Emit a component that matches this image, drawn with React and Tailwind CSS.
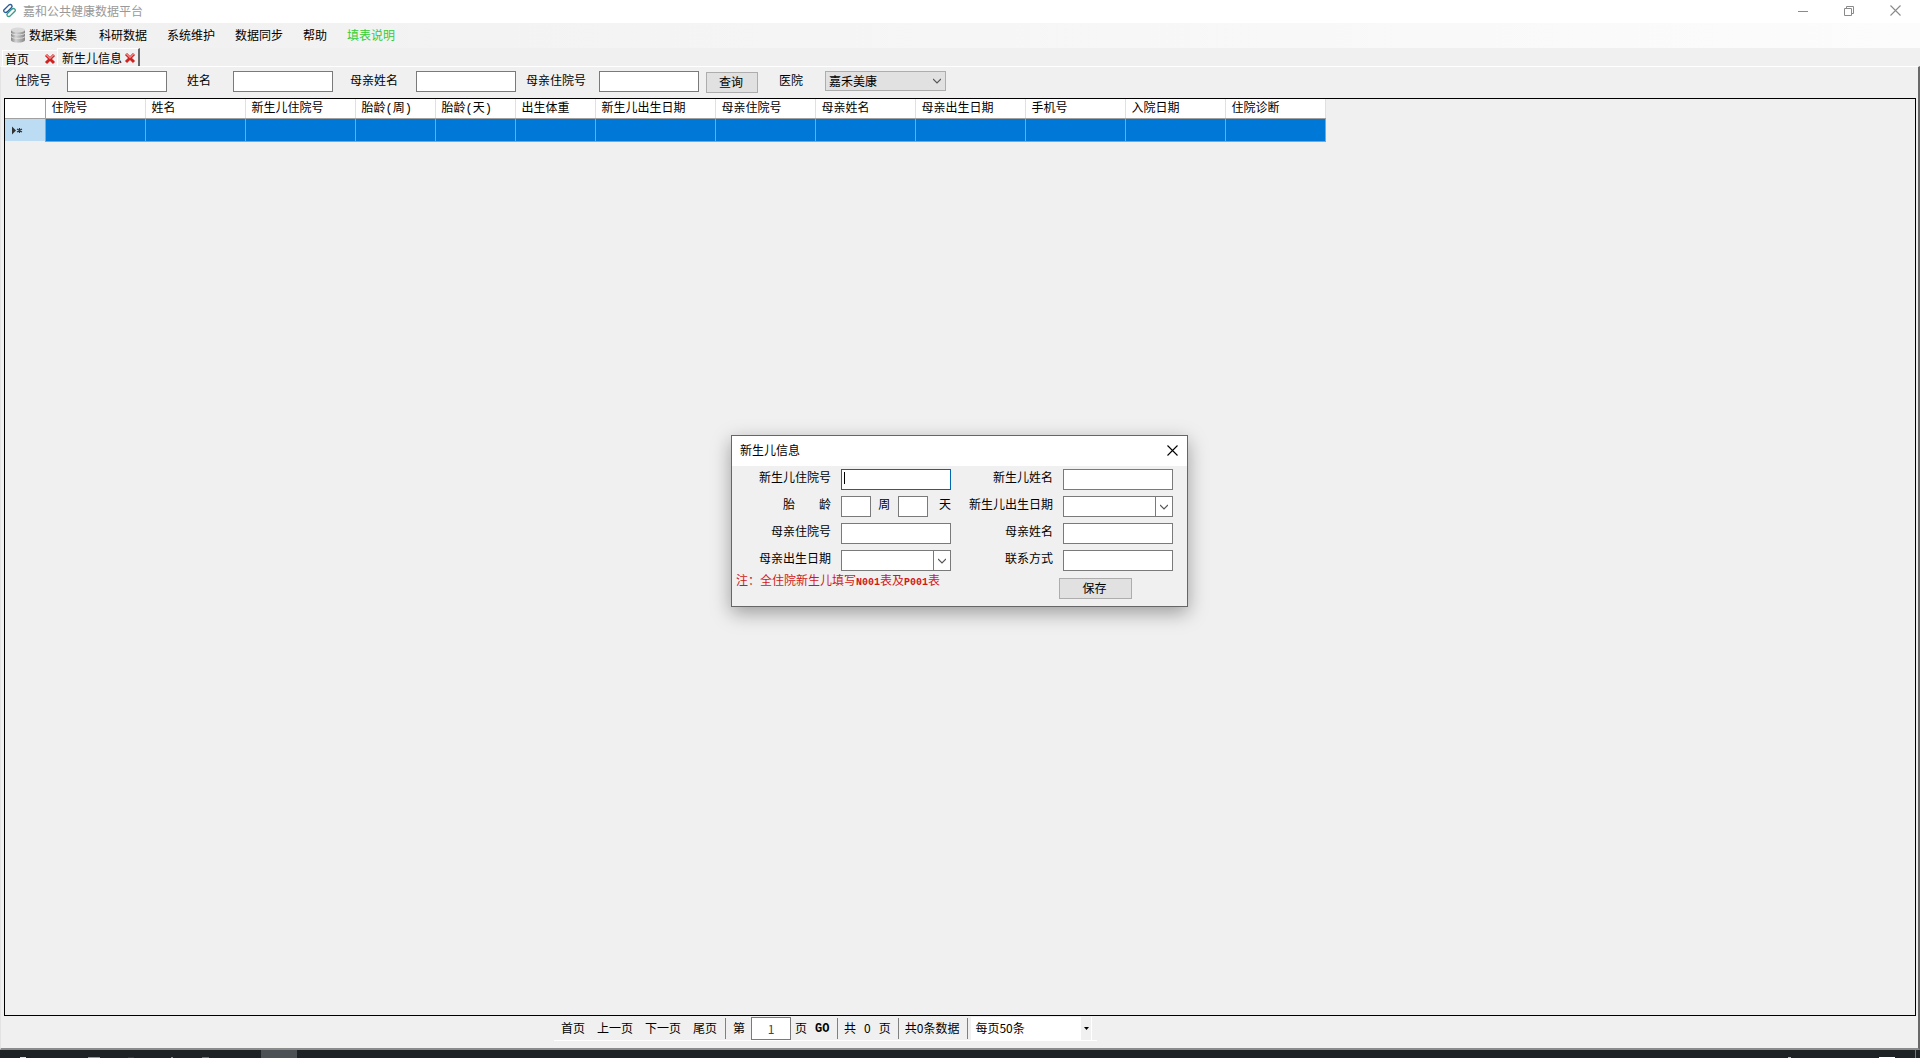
import React, { useState } from 'react';

const MENUS = ['科研数据', '系统维护', '数据同步', '帮助'];

const COLUMNS = [
  { label: '住院号', width: 'w-[100px]' },
  { label: '姓名', width: 'w-[100px]' },
  { label: '新生儿住院号', width: 'w-[110px]' },
  { label: '胎龄(周)', width: 'w-[80px]' },
  { label: '胎龄(天)', width: 'w-[80px]' },
  { label: '出生体重', width: 'w-[80px]' },
  { label: '新生儿出生日期', width: 'w-[120px]' },
  { label: '母亲住院号', width: 'w-[100px]' },
  { label: '母亲姓名', width: 'w-[100px]' },
  { label: '母亲出生日期', width: 'w-[110px]' },
  { label: '手机号', width: 'w-[100px]' },
  { label: '入院日期', width: 'w-[100px]' },
  { label: '住院诊断', width: 'w-[100px]' },
];

const FILTERS = [
  { id: 'f-no', label: '住院号', size: 'w-[52px]' },
  { id: 'f-name', label: '姓名', size: 'ml-5 w-[46px]' },
  { id: 'f-mother', label: '母亲姓名', size: 'ml-[17px] w-[66px]' },
  { id: 'f-mother-no', label: '母亲住院号', size: 'ml-[10px] w-[73px]' },
];

function Logo() {
  return (
    <svg className="h-[15px] w-[15px]" viewBox="0 0 16 16" fill="none" strokeWidth="1.5" strokeLinejoin="round">
      <path d="M2 7.500 7.500 2Q9 1 10.300 2.200 11.400 3.600 10 5L5.500 9.500Q4 10.800 2.500 9.600 1.200 8.500 2 7.500Z" stroke="#2a5c98" />
      <path d="M14 8.500 8.500 14Q7 15 5.700 13.800 4.600 12.400 6 11L10.500 6.500Q12 5.200 13.500 6.400 14.800 7.500 14 8.500Z" stroke="#3a9a8c" />
    </svg>
  );
}

function DatabaseIcon() {
  return (
    <svg className="h-4 w-4" viewBox="0 0 16 16">
      <defs>
        <linearGradient id="db" x1="0" x2="1">
          <stop offset="0" stopColor="#858585" />
          <stop offset="0.35" stopColor="#d4d4d4" />
          <stop offset="1" stopColor="#858585" />
        </linearGradient>
      </defs>
      <path d="M1 3v10c0 3.500 14 3.500 14 0V3z" fill="url(#db)" />
      <ellipse cx="8" cy="3" rx="7" ry="2.500" fill="#d9d9d9" />
      <path d="M1 6c1 2.500 13 2.500 14 0M1 9.500c1 2.500 13 2.500 14 0" fill="none" stroke="#e8e8e8" strokeWidth="0.800" />
    </svg>
  );
}

function RedCross() {
  return (
    <svg className="h-3 w-3" viewBox="0 0 12 12" fill="none">
      <path d="M2 2 10 10M10 2 2 10" stroke="#cf2323" strokeWidth="3" />
      <path d="M2 1.500 6 5.500 10 1.500" stroke="#ee8f8c" strokeWidth="1.200" />
    </svg>
  );
}

function Chevron() {
  return (
    <svg className="h-2 w-2" viewBox="0 0 8 8" fill="none" stroke="#555" strokeWidth="1.200">
      <path d="M0 2 4 6 8 2" />
    </svg>
  );
}

function CloseMark() {
  return (
    <svg className="h-[11px] w-[11px]" viewBox="0 0 11 11" fill="none" stroke="currentColor" strokeWidth="1.100">
      <path d="M.5.5l10 10M10.500.500l-10 10" />
    </svg>
  );
}

function TitleBar() {
  return (
    <header className="flex h-[23px] items-center bg-white pr-[2px] pb-[2px] pl-[2px] text-[#999]">
      <Logo />
      <h1 className="ml-[6px] flex-1">嘉和公共健康数据平台</h1>
      <div className="flex h-full text-[#8a8a8a]">
        <button aria-label="最小化" className="flex w-[46px] items-center justify-center">
          <svg className="h-[10px] w-[10px]" viewBox="0 0 10 10"><path d="M0 5.500h10" stroke="currentColor" /></svg>
        </button>
        <button aria-label="还原" className="flex w-[46px] items-center justify-center">
          <svg className="h-[10px] w-[10px]" viewBox="0 0 10 10" fill="none" stroke="currentColor">
            <path d="M.5 2.500h7v7h-7zM2.500 2.500v-2h7v7h-2" />
          </svg>
        </button>
        <button aria-label="关闭" className="flex w-[46px] items-center justify-center"><CloseMark /></button>
      </div>
    </header>
  );
}

function MenuBar() {
  return (
    <nav className="flex h-[25px] items-center bg-linear-to-r from-[#f0f0f0] to-[#fcfcfc] pb-[2px] pl-[10px]">
      <button className="flex items-center gap-[3px]"><DatabaseIcon />数据采集</button>
      <div className="ml-[22px] flex gap-5">
        {MENUS.map((m) => <button key={m}>{m}</button>)}
        <button className="text-[#32cd32]">填表说明</button>
      </div>
    </nav>
  );
}

function Tabs() {
  return (
    <div className="flex h-[18px] items-end pl-[2px]">
      <div className="flex h-[16px] w-[55px] items-center justify-between border-t border-l border-white pr-px pl-[2px]">
        <button>首页</button>
        <button aria-label="关闭 首页"><RedCross /></button>
      </div>
      <div className="flex h-[18px] w-[83px] items-center justify-between border-t border-r-2 border-l border-t-white border-r-[#696969] border-l-white pr-[2px] pl-1">
        <button>新生儿信息</button>
        <button aria-label="关闭 新生儿信息"><RedCross /></button>
      </div>
    </div>
  );
}

function FilterBar() {
  return (
    <form className="flex h-[31px] items-start pt-1 pl-[11px] leading-[18px]" onSubmit={(e) => e.preventDefault()}>
      {FILTERS.map((f) => (
        <React.Fragment key={f.id}>
          <label htmlFor={f.id} className={f.size}>{f.label}</label>
          <input id={f.id} className="h-[21px] w-[100px] border border-[#7a7a7a] bg-white px-1 outline-none" />
        </React.Fragment>
      ))}
      <button className="mt-px ml-[7px] h-[21px] w-[52px] border border-[#adadad] bg-[#e1e1e1] pr-[2px] pb-[2px]">查询</button>
      <label htmlFor="hospital" className="ml-[21px] w-[46px]">医院</label>
      <div className="relative">
        <select id="hospital" className="h-[20px] w-[121px] appearance-none border border-[#adadad] bg-[#e1e1e1] px-[3px]">
          <option>嘉禾美康</option>
        </select>
        <span className="pointer-events-none absolute top-[6px] right-[5px]"><Chevron /></span>
      </div>
    </form>
  );
}

function PatientGrid() {
  return (
    <main className="flex-1 overflow-auto border border-black">
      <table className="table-fixed border-collapse">
        <thead>
          <tr className="h-[19px] bg-white">
            <th className="w-[40px] border-r border-b border-[#a0a0a0]"></th>
            {COLUMNS.map((c) => (
              <th key={c.label} className={`${c.width} border-r border-b border-r-[#e0e0e0] border-b-[#a0a0a0] pt-[3px] pl-[6px] text-left font-['Liberation_Mono','Noto_Sans_CJK_SC',monospace] leading-[15px] font-normal whitespace-nowrap`}>
                {c.label}
              </th>
            ))}
          </tr>
        </thead>
        <tbody>
          <tr className="h-[23px] bg-[#0078d7]">
            <th className="border-r border-[#a0a0a0] bg-[#bcdcf4] pt-[2px] pl-[5px]">
              <svg className="h-[9px] w-[14px]" viewBox="0 0 14 9">
                <path d="M2 .5v8l4-4z" fill="#333" />
                <path d="M9.500 2v5M7 3l5 3M12 3 7 6" stroke="#333" strokeWidth="1.200" />
              </svg>
            </th>
            {COLUMNS.map((c) => <td key={c.label} className="border-r border-b border-[#84a4bf]"></td>)}
          </tr>
        </tbody>
      </table>
    </main>
  );
}

function Separator() {
  return <span className="h-[21px] w-px bg-[#808080]" />;
}

function Pager() {
  return (
    <footer className="flex h-[32px] items-start pl-[550px]">
      <div className="flex h-[25px] items-center border-b border-white pr-[5px] pl-[7px]">
        <div className="flex gap-3 pr-2">
          <button>首页</button>
          <button>上一页</button>
          <button>下一页</button>
          <button>尾页</button>
        </div>
        <Separator />
        <label htmlFor="page" className="pr-[6px] pl-[7px]">第</label>
        <input id="page" defaultValue="1" className="h-[23px] w-[40px] border border-[#7a7a7a] bg-white text-center text-[#444] outline-none" />
        <span className="ml-1 w-5">页</span>
        <button className="w-[22px] pt-px text-left font-['Liberation_Mono',monospace] text-[12px] font-bold">GO</button>
        <Separator />
        <span className="flex gap-2 pr-[7px] pl-[6px]">
          <span>共</span>
          <span>0</span>
          <span>页</span>
        </span>
        <Separator />
        <span className="pr-2 pl-[6px]">共0条数据</span>
        <Separator />
        <div className="relative ml-[3px]">
          <select aria-label="每页条数" className="h-[23px] w-[121px] appearance-none bg-white px-1">
            <option>每页50条</option>
          </select>
          <span className="pointer-events-none absolute top-0 right-px flex h-[23px] w-[10px] items-center justify-center bg-[#f0f0f0]">
            <svg className="h-[3px] w-[5px]" viewBox="0 0 5 3"><path d="M0 0h5L2.500 3z" /></svg>
          </span>
        </div>
      </div>
    </footer>
  );
}

const FIELD = 'h-[21px] border border-[#7a7a7a] bg-white px-[3px] outline-none';

function DateBox({ id }) {
  return (
    <div className="flex w-[110px] border border-[#7a7a7a] bg-white">
      <input id={id} className="h-[19px] w-full min-w-0 px-[3px] outline-none" />
      <button type="button" aria-label="选择日期" className="flex w-[17px] shrink-0 items-center justify-center border-l border-[#7a7a7a]">
        <Chevron />
      </button>
    </div>
  );
}

function Row({ id, label, children }) {
  return (
    <div className="flex items-start justify-end gap-[10px]">
      <label htmlFor={id} className="whitespace-pre">{label}</label>
      {children || <input id={id} className={`${FIELD} w-[110px]`} />}
    </div>
  );
}

function NewbornDialog({ onClose }) {
  return (
    <section role="dialog" aria-label="新生儿信息" className="absolute top-[435px] left-1/2 h-[172px] w-[457px] -translate-x-[229px] border border-[#666] bg-[#f0f0f0] shadow-[0_6px_18px_rgba(0,0,0,0.35)]">
      <div className="flex h-[30px] items-center justify-between bg-white pr-[9px] pb-[2px] pl-2">
        <h2>新生儿信息</h2>
        <button aria-label="关闭" onClick={onClose}><CloseMark /></button>
      </div>
      <form onSubmit={(e) => e.preventDefault()}>
        <div className="flex justify-between pt-[3px] pr-[14px] pl-[27px]">
          <div className="flex flex-col gap-[6px]">
            <Row id="baby-no" label="新生儿住院号">
              <div className="relative">
                <input id="baby-no" autoFocus className="block h-[21px] w-[110px] border border-[#0067b0] bg-white px-[2px] caret-transparent outline-none" />
                <span className="pointer-events-none absolute top-[3px] left-[3px] h-3 w-px bg-black" />
              </div>
            </Row>
            <Row id="weeks" label="胎　　龄">
              <div className="flex w-[110px] justify-between">
                <input id="weeks" className={`${FIELD} w-[30px]`} />
                <label htmlFor="weeks">周</label>
                <input id="days" className={`${FIELD} w-[30px]`} />
                <label htmlFor="days" className="ml-1">天</label>
              </div>
            </Row>
            <Row id="mother-no" label="母亲住院号" />
            <Row id="mother-birth" label="母亲出生日期"><DateBox id="mother-birth" /></Row>
          </div>
          <div className="flex flex-col gap-[6px]">
            <Row id="baby-name" label="新生儿姓名" />
            <Row id="baby-birth" label="新生儿出生日期"><DateBox id="baby-birth" /></Row>
            <Row id="mother-name" label="母亲姓名" />
            <Row id="phone" label="联系方式" />
          </div>
        </div>
        <div className="flex items-start justify-between pt-px pr-[55px] pl-1">
          <p className="text-[#d01818]">
            注：全住院新生儿填写<span className="font-['Liberation_Mono',monospace] text-[10px] font-bold">N001</span>表及<span className="font-['Liberation_Mono',monospace] text-[10px] font-bold">P001</span>表
          </p>
          <button className="mt-[6px] h-[21px] w-[73px] border border-[#adadad] bg-[#e1e1e1] pr-[2px] pb-px">保存</button>
        </div>
      </form>
    </section>
  );
}

function Taskbar() {
  return (
    <div className="flex h-2 items-end overflow-hidden bg-[#1d2225]">
      <span className="ml-5 h-px w-[6px] bg-[#ddd]" />
      <span className="ml-[62px] h-px w-3 bg-[#999]" />
      <span className="ml-[28px] h-px w-[6px] bg-[#8a1522]" />
      <span className="ml-[37px] h-px w-[2px] bg-[#9a80b8]" />
      <span className="ml-[29px] h-px w-[7px] bg-[#c05045]" />
      <span className="ml-[52px] h-full w-[36px] bg-[#4b5154]" />
      <span className="ml-auto h-px w-[3px] bg-[#bbb]" />
      <span className="ml-[88px] h-px w-4 bg-white" />
      <span className="mr-1 ml-5 h-full w-px bg-[#777]" />
    </div>
  );
}

export default function App() {
  const [open, setOpen] = useState(true);

  return (
    <div className="relative flex h-screen flex-col overflow-hidden bg-[#f0f0f0] font-['Noto_Sans_CJK_SC',sans-serif] text-[12px] leading-[16px] text-black">
      <TitleBar />
      <MenuBar />
      <Tabs />
      <div className="flex min-h-0 flex-1 flex-col border-t border-r-2 border-b-2 border-l border-t-white border-r-[#696969] border-b-[#8a8c8b] border-l-[#e3e3e3] pr-[2px] pl-[3px]">
        <FilterBar />
        <PatientGrid />
        <Pager />
      </div>
      <Taskbar />
      {open && <NewbornDialog onClose={() => setOpen(false)} />}
    </div>
  );
}
